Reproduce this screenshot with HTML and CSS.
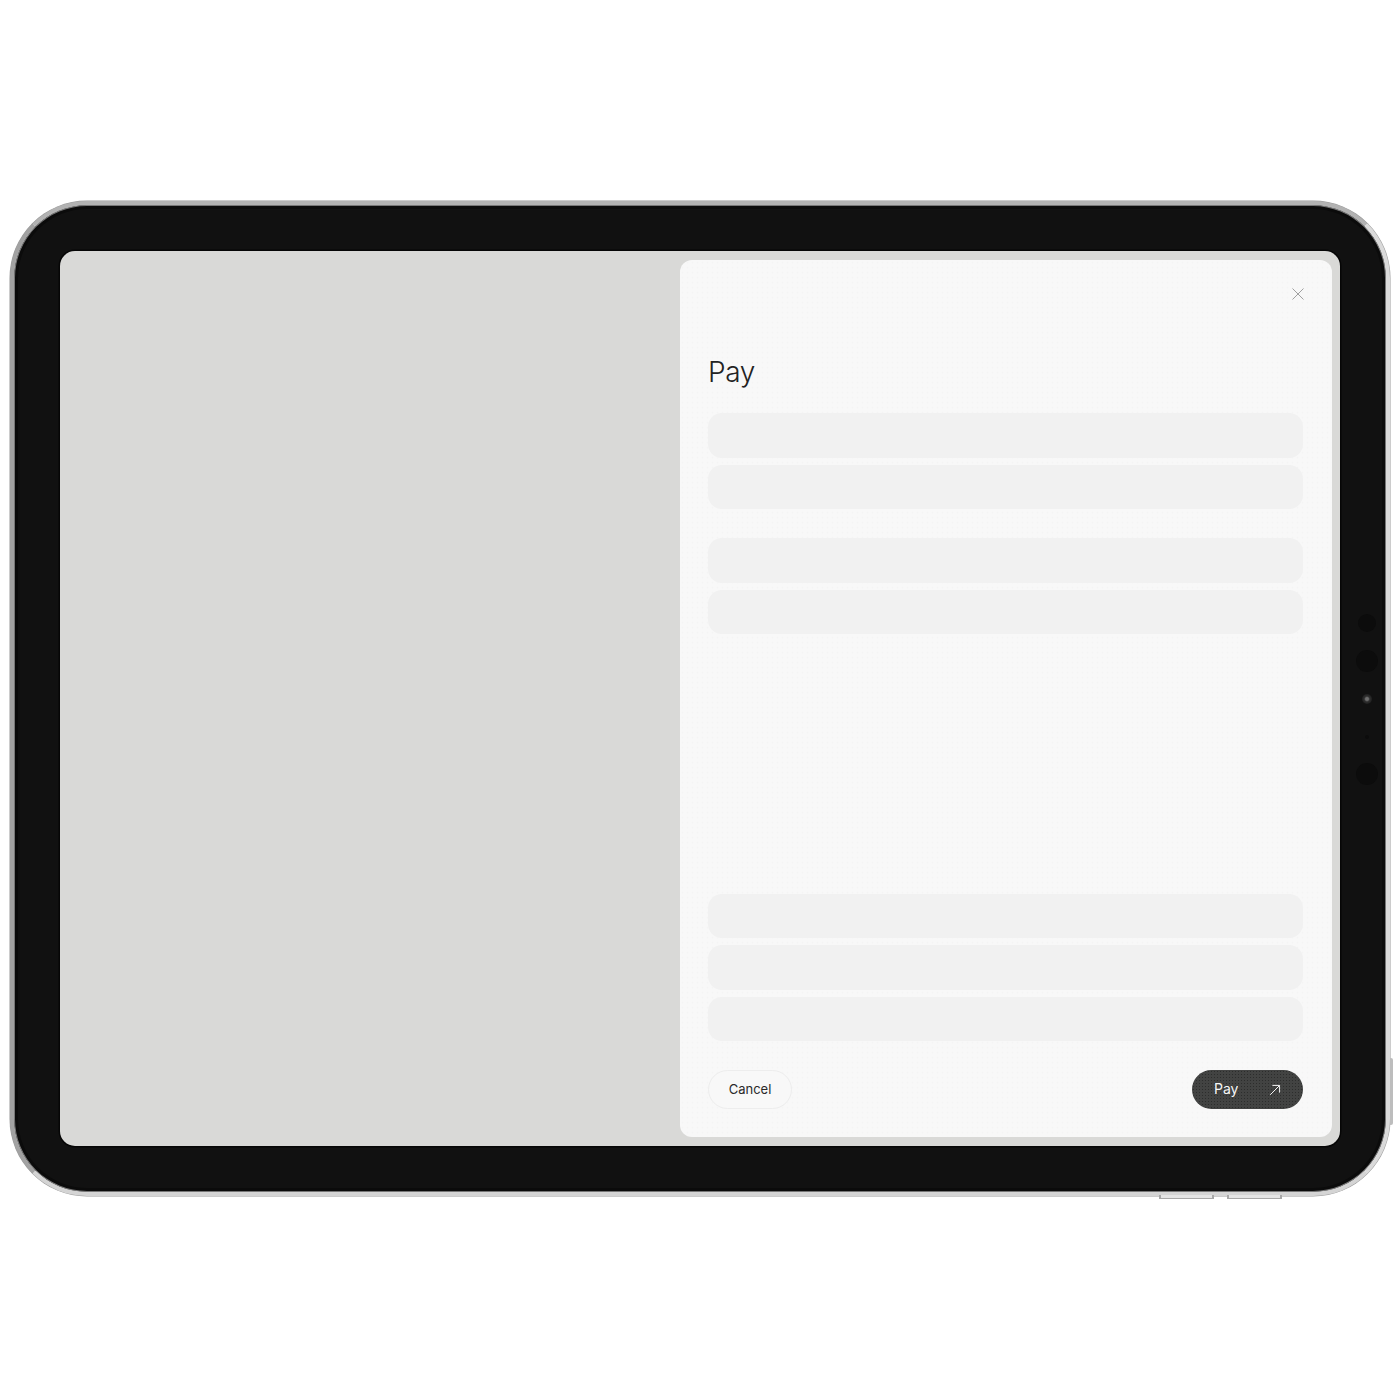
FILE: index.html
```html
<!DOCTYPE html>
<html lang="en">
<head>
<meta charset="utf-8">
<title>Pay</title>
<link rel="stylesheet" href="styles.css">
</head>
<body>
<main class="page">
  <div class="device">
    <span class="side-key side-key-right"></span>
    <span class="side-key bottom-key bottom-key-a"></span>
    <span class="side-key bottom-key bottom-key-b"></span>
    <div class="sensor sensor-a"></div>
    <div class="sensor sensor-b"></div>
    <div class="sensor lens"></div>
    <div class="sensor sensor-c"></div>
    <div class="sensor sensor-d"></div>
    <div class="screen">
      <section class="panel">
        <div class="panel-top">
          <svg class="close" width="14" height="14" viewBox="0 0 14 14" aria-label="Close">
            <path d="M1.5 1.5 12.5 12.5M12.5 1.5 1.5 12.5" fill="none" stroke="#a0a0a0" stroke-width="1"/>
          </svg>
        </div>
        <h1 class="title">Pay</h1>
        <div class="group group-first">
          <div class="row"></div>
          <div class="row"></div>
        </div>
        <div class="group group-second">
          <div class="row"></div>
          <div class="row"></div>
        </div>
        <div class="group group-third">
          <div class="row"></div>
          <div class="row"></div>
          <div class="row"></div>
        </div>
        <div class="actions">
          <button class="btn btn-cancel" type="button"><span class="btn-label">Cancel</span></button>
          <button class="btn btn-pay" type="button">
            <span class="btn-label">Pay</span>
            <svg width="12" height="12" viewBox="0 0 12 12" aria-hidden="true">
              <path d="M1.2 10.8 10.4 1.6M3.4 1.4H10.6V8.6" fill="none" stroke="#f4f4f4" stroke-width="1"/>
            </svg>
          </button>
        </div>
      </section>
    </div>
  </div>
</main>
</body>
</html>
```
FILE: styles.css
```css
* { box-sizing: border-box; }
html, body { margin: 0; padding: 0; background: #fff; }
body { font-family: Inter, "Liberation Sans", sans-serif; }

.page {
  width: 1400px;
  height: 1400px;
  padding: 201px 10px 0;
}

.device {
  position: relative;
  width: 1380px;
  height: 995px;
  padding: 46px;
  background: #111;
  background-clip: padding-box;
  border: 4px solid #b2b2b2;
  border-left-color: #a2a2a2;
  border-right-color: #dadada;
  border-bottom-color: #d4d4d4;
  border-radius: 77px;
  box-shadow: 0 0 0 0.5px #9a9a9a, inset 0 0 0 1px #777, inset 0 0 0 4px #0b0b0b;
}

.side-key {
  position: absolute;
  background: #bdbdbd;
}

.side-key-right {
  right: -7px;
  top: 853px;
  width: 3px;
  height: 67px;
  border-radius: 0 2px 2px 0;
}

.bottom-key {
  top: 990px;
  width: 55px;
  height: 4px;
  background: #e4e4e4;
  border-bottom: 1px solid #a8a8a8;
  border-left: 2px solid #a8a8a8;
  border-right: 2px solid #a8a8a8;
}
.bottom-key-a { left: 1145px; }
.bottom-key-b { left: 1213px; }

.sensor {
  position: absolute;
  background: #0c0c0c;
  border-radius: 50%;
}
.sensor-a { left: 1343.5px; top: 409px; width: 18px; height: 18px; }
.sensor-b { left: 1341.5px; top: 445px; width: 22px; height: 22px; }
.lens {
  left: 1347.5px; top: 489px; width: 10px; height: 10px;
  background: radial-gradient(circle, #6e6e6e 0 1.4px, #303030 2.8px, #1e1e1e 5px);
}
.sensor-c { left: 1350.5px; top: 529.5px; width: 4px; height: 4px; }
.sensor-d { left: 1341.5px; top: 558px; width: 22px; height: 22px; }

.screen {
  display: flex;
  justify-content: flex-end;
  width: 1280px;
  height: 895px;
  padding: 9px 8px;
  background: #d9d9d7;
  border-radius: 15px;
  box-shadow: 0 0 0 1.5px #060606;
}

.panel {
  display: flex;
  flex-direction: column;
  width: 652px;
  height: 877px;
  padding: 0 29px 28px 28px;
  border-radius: 12px;
  background-color: #f8f8f8;
  background-image: radial-gradient(circle, #f4f4f4 0.8px, transparent 1.1px);
  background-size: 5px 5px;
}

.panel-top {
  display: flex;
  justify-content: flex-end;
  height: 80px;
  padding-top: 27px;
  margin-right: -2px;
}

.close { display: block; }

.title {
  margin: 0;
  height: 73px;
  font-size: 28px;
  font-weight: 300;
  line-height: 64px;
  letter-spacing: -0.4px;
  color: #222;
}

.group {
  display: flex;
  flex-direction: column;
  gap: 7px;
}
.group-second { margin-top: 29px; }
.group-third { margin-top: auto; }

.row {
  height: 44.5px;
  border-radius: 14px;
  background: #f1f1f1;
}

.actions {
  display: flex;
  justify-content: space-between;
  margin-top: 29px;
}

.btn {
  display: flex;
  align-items: center;
  height: 39px;
  font-family: inherit;
  font-size: 13px;
  font-weight: 400;
  border-radius: 20px;
  cursor: pointer;
}

.btn-label { position: relative; top: -1px; }

.btn-cancel {
  justify-content: center;
  width: 84px;
  padding: 0;
  background: #f8f8f8;
  border: 1px solid #ededed;
  color: #2a2a2a;
}

.btn-pay {
  justify-content: space-between;
  width: 111px;
  padding: 0 22px;
  font-size: 14px;
  border: 0;
  color: #f6f6f6;
  background-color: #424342;
  background-image: radial-gradient(circle, #2c2d2c 0.6px, transparent 0.9px);
  background-size: 3px 3px;
}
```
